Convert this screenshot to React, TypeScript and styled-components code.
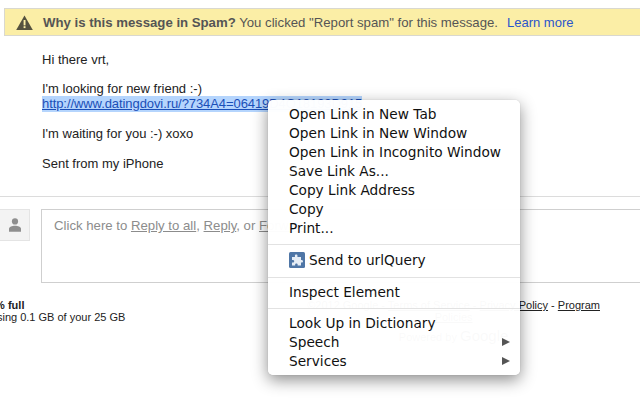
import styled, { createGlobalStyle } from 'styled-components';

const GlobalStyle = createGlobalStyle`
  html, body {
    margin: 0;
    padding: 0;
    background: #fff;
    overflow: hidden;
  }
  body {
    width: 640px;
    height: 400px;
    font-family: 'Liberation Sans', Arial, sans-serif;
  }
`;

const topItems = [
  'Open Link in New Tab',
  'Open Link in New Window',
  'Open Link in Incognito Window',
  'Save Link As...',
  'Copy Link Address',
  'Copy',
  'Print...',
];

const App = () => {
  return (
    <Page>
      <GlobalStyle />
      <Banner>
        <svg width="17" height="15" viewBox="0 0 17 15">
          <path d="M8.5 0.5 L16.8 15 H0.2 Z" fill="#55523f" />
          <rect x="7.6" y="5" width="1.9" height="5.4" fill="#fdf0a8" />
          <rect x="7.6" y="11.2" width="1.9" height="1.9" fill="#fdf0a8" />
        </svg>
        <BannerText>
          <b>Why is this message in Spam?</b> You clicked "Report spam" for this message.
        </BannerText>
        <LearnMore>Learn more</LearnMore>
      </Banner>

      <Message>
        <Para $gap={14}>Hi there vrt,</Para>
        <Para>
          I'm looking for new friend :-)
          <br />
          <SpamLink>http://www.datingdovi.ru/?734A4=06419D4Q18193D915</SpamLink>
        </Para>
        <Para>I'm waiting for you :-) xoxo</Para>
        <Para>Sent from my iPhone</Para>
      </Message>

      <Rule />

      <ReplyRow>
        <Avatar>
          <svg width="12" height="14" viewBox="0 0 12 14">
            <circle cx="6" cy="3.4" r="3.1" fill="#8f8f8f" />
            <path d="M0 13.8 V10.8 C0 8.8 3.2 7.8 6 7.8 C8.8 7.8 12 8.8 12 10.8 V13.8 Z" fill="#8f8f8f" />
          </svg>
        </Avatar>
        <ReplyBox>
          Click here to <u>Reply to all</u>, <u>Reply</u>, or <u>Forward</u>
        </ReplyBox>
      </ReplyRow>

      <Footer>
        <Quota>
          <b>0% full</b>
          <br />
          Using 0.1 GB of your 25 GB
        </Quota>
        <FooterLinks>
          <div>
            ©2012 Google - <u>Terms of Service</u> - <u>Privacy Policy</u> - <u>Program</u>
          </div>
          <div>
            <u>Policies</u>
          </div>
          <PoweredBy>
            Powered by <GoogleWord>Google</GoogleWord>
          </PoweredBy>
        </FooterLinks>
      </Footer>

      <Menu>
        <MenuGroup $below={7} $after={5}>
          {topItems.map((item) => (
            <MenuItem key={item}>{item}</MenuItem>
          ))}
        </MenuGroup>
        <MenuGroup $below={8} $after={4}>
          <MenuItem>
            <svg width="16" height="16" viewBox="0 0 16 16">
              <rect x="0" y="0" width="16" height="16" rx="1.5" fill="#4f76a6" />
              <path
                d="M3 5 H6 C5.6 3.2 6.2 2.5 7.2 2.5 C8.2 2.5 8.8 3.2 8.4 5 H12 V8 C13.8 7.6 14 8.6 14 9.2 C14 10 13.4 10.8 12 10.4 V13.5 H8.6 C9 12 8.2 11.4 7.4 11.4 C6.6 11.4 5.8 12 6.2 13.5 H3 V10.4 C4.6 10.8 5.2 10 5.2 9.2 C5.2 8.4 4.6 7.6 3 8 Z"
                fill="#e6edf5"
              />
            </svg>
            <ExtensionLabel>Send to urlQuery</ExtensionLabel>
          </MenuItem>
        </MenuGroup>
        <MenuGroup $below={7} $after={4}>
          <MenuItem>Inspect Element</MenuItem>
        </MenuGroup>
        <MenuGroup>
          <MenuItem>Look Up in Dictionary</MenuItem>
          <MenuItem>
            Speech
            <Arrow />
          </MenuItem>
          <MenuItem>
            Services
            <Arrow />
          </MenuItem>
        </MenuGroup>
      </Menu>
    </Page>
  );
};

export default App;

const Page = styled.div`
  position: relative;
  width: 640px;
  height: 400px;
  overflow: hidden;
  padding-top: 8px;
  box-sizing: border-box;
  font-size: 13px;
  color: #222;
`;

const Banner = styled.div`
  display: flex;
  align-items: center;
  box-sizing: border-box;
  height: 28px;
  margin-left: 4px;
  padding-left: 11px;
  background: #fbeea6;
  border: 1px solid #d9d8cf;
  border-right: none;
  color: #555;
  font-size: 13.2px;
`;

const BannerText = styled.span`
  margin-left: 10px;
  white-space: nowrap;
`;

const LearnMore = styled.span`
  margin-left: 9px;
  color: #2a55cc;
  font-size: 13px;
`;

const Message = styled.div`
  padding: 16px 0 0 42px;
  height: 133px;
  box-sizing: border-box;
  line-height: 15px;
  white-space: nowrap;
`;

const Para = styled.p<{ $gap?: number }>`
  margin: 0 0 ${(p) => p.$gap ?? 15}px;
`;

const SpamLink = styled.span`
  color: #1a4fb8;
  text-decoration: underline;
  background: #b5d5fd;
  padding: 0 0 1px;
  letter-spacing: -0.08px;
`;

const Rule = styled.div`
  height: 1px;
  margin-top: 27px;
  background: #dcdcdc;
`;

const ReplyRow = styled.div`
  display: flex;
  align-items: flex-start;
  gap: 11px;
  margin-top: 12px;
`;

const Avatar = styled.div`
  display: flex;
  align-items: center;
  justify-content: center;
  box-sizing: border-box;
  width: 30px;
  height: 32px;
  padding-bottom: 1px;
  background: #f3f3f3;
  border: 1px solid #e4e4e4;
  border-left: none;
`;

const ReplyBox = styled.div`
  flex: 1;
  box-sizing: border-box;
  height: 74px;
  padding: 8px 12px;
  border: 1px solid #cfcfcf;
  border-right: none;
  color: #8c8c8c;
  font-size: 13.2px;
  white-space: nowrap;
`;

const Footer = styled.div`
  display: flex;
  justify-content: space-between;
  margin-top: 16px;
  font-size: 11px;
  line-height: 12px;
  color: #222;
`;

const Quota = styled.div`
  margin-left: -11px;
  white-space: nowrap;
`;

const FooterLinks = styled.div`
  margin-right: 40px;
  text-align: center;
  white-space: nowrap;
`;

const PoweredBy = styled.div`
  margin-top: 5px;
  line-height: 16px;
`;

const GoogleWord = styled.span`
  font-size: 15px;
`;

const Menu = styled.div`
  position: absolute;
  left: 268px;
  top: 100px;
  width: 252px;
  height: 275px;
  box-sizing: border-box;
  padding-top: 4px;
  background: rgba(255, 255, 255, 0.975);
  border-radius: 5px;
  box-shadow: 0 5px 16px rgba(0, 0, 0, 0.45), 0 0 1px rgba(0, 0, 0, 0.25);
  font-family: 'DejaVu Sans', sans-serif;
  font-size: 13.7px;
  color: #111;
`;

const MenuGroup = styled.div<{ $below?: number; $after?: number }>`
  padding-bottom: ${(p) => p.$below ?? 0}px;
  margin-bottom: ${(p) => p.$after ?? 0}px;
  border-bottom: ${(p) => (p.$below ? '1px solid #e2e2e2' : 'none')};
`;

const MenuItem = styled.div`
  display: flex;
  align-items: center;
  height: 19px;
  padding-left: 21px;
  padding-right: 10px;
  white-space: nowrap;
`;

const ExtensionLabel = styled.span`
  margin-left: 4px;
`;

const Arrow = styled.span`
  margin-left: auto;
  width: 0;
  height: 0;
  border-left: 8px solid #555;
  border-top: 4.5px solid transparent;
  border-bottom: 4.5px solid transparent;
`;
